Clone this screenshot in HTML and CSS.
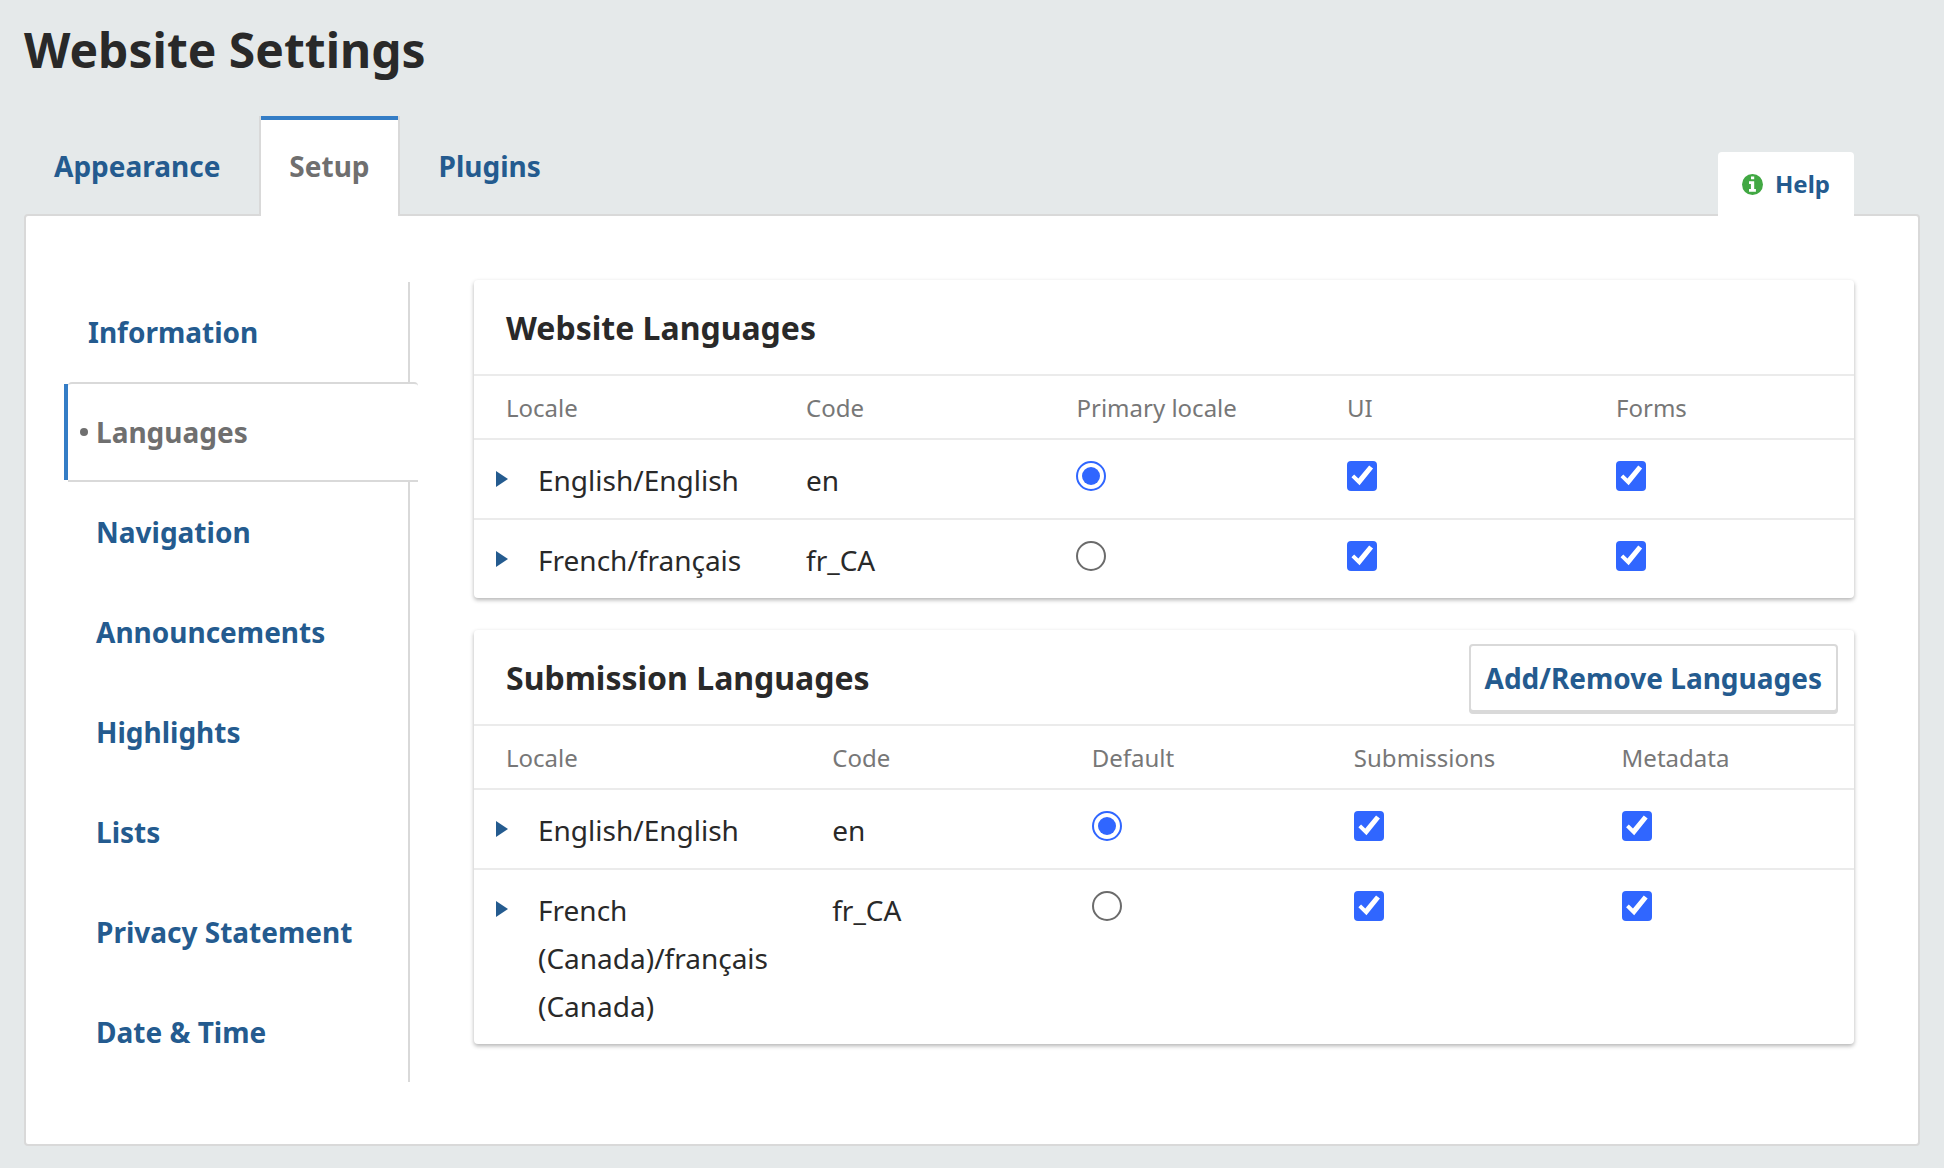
FILE: index.html
```html
<!DOCTYPE html>
<html lang="en">
<head>
<meta charset="utf-8">
<meta name="viewport" content="width=device-width, initial-scale=1">
<title>Website Settings</title>
<link rel="stylesheet" href="styles.css">
</head>
<body>
<main class="page">
  <h1 class="page-title">Website Settings</h1>

  <div class="tab-bar">
    <nav class="tabs" aria-label="Settings">
      <a class="tab" href="#appearance">Appearance</a>
      <a class="tab tab-current" href="#setup" aria-current="page">Setup</a>
      <a class="tab" href="#plugins">Plugins</a>
    </nav>
    <a class="help" href="#help">
      <svg class="help-icon" viewBox="0 0 21 21" aria-hidden="true">
        <circle cx="10.5" cy="10.5" r="10.5" fill="#41a843"/>
        <path fill="#fff" d="M9 2.4h3.2v2.8H9zM7 7.2h5.2v7.9h1.7v2.7H7v-2.7h1.9V9.9H7z"/>
      </svg>
      Help
    </a>
  </div>

  <div class="panel">
    <nav class="side-nav" aria-label="Setup">
      <a class="side-link side-link-first" href="#information">Information</a>
      <a class="side-link side-link-current" href="#languages" aria-current="page">Languages</a>
      <a class="side-link" href="#navigation">Navigation</a>
      <a class="side-link" href="#announcements">Announcements</a>
      <a class="side-link" href="#highlights">Highlights</a>
      <a class="side-link" href="#lists">Lists</a>
      <a class="side-link" href="#privacy">Privacy Statement</a>
      <a class="side-link" href="#datetime">Date &amp; Time</a>
    </nav>

    <div class="content">
      <section class="card" aria-labelledby="website-title">
        <div class="card-header">
          <h2 class="card-title" id="website-title">Website Languages</h2>
        </div>
        <table class="grid grid-website">
          <colgroup><col class="col-locale"><col class="col-code"><col class="col-radio"><col class="col-first-check"><col></colgroup>
          <thead>
            <tr><th scope="col">Locale</th><th scope="col">Code</th><th scope="col">Primary locale</th><th scope="col">UI</th><th scope="col">Forms</th></tr>
          </thead>
          <tbody>
            <tr>
              <td><div class="locale"><button class="expand" type="button" aria-label="Show settings for English"></button><span>English/English</span></div></td>
              <td>en</td>
              <td><input class="radio" type="radio" name="primary" aria-label="English as primary locale" checked></td>
              <td><input class="check" type="checkbox" aria-label="English in UI" checked></td>
              <td><input class="check" type="checkbox" aria-label="English in forms" checked></td>
            </tr>
            <tr>
              <td><div class="locale"><button class="expand" type="button" aria-label="Show settings for French"></button><span>French/français</span></div></td>
              <td>fr_CA</td>
              <td><input class="radio" type="radio" name="primary" aria-label="French as primary locale"></td>
              <td><input class="check" type="checkbox" aria-label="French in UI" checked></td>
              <td><input class="check" type="checkbox" aria-label="French in forms" checked></td>
            </tr>
          </tbody>
        </table>
      </section>

      <section class="card" aria-labelledby="submission-title">
        <div class="card-header">
          <h2 class="card-title" id="submission-title">Submission Languages</h2>
          <button class="button" type="button">Add/Remove Languages</button>
        </div>
        <table class="grid grid-submission">
          <colgroup><col class="col-locale"><col class="col-code"><col class="col-radio"><col class="col-first-check"><col></colgroup>
          <thead>
            <tr><th scope="col">Locale</th><th scope="col">Code</th><th scope="col">Default</th><th scope="col">Submissions</th><th scope="col">Metadata</th></tr>
          </thead>
          <tbody>
            <tr>
              <td><div class="locale"><button class="expand" type="button" aria-label="Show settings for English"></button><span>English/English</span></div></td>
              <td>en</td>
              <td><input class="radio" type="radio" name="default" aria-label="English as default" checked></td>
              <td><input class="check" type="checkbox" aria-label="English for submissions" checked></td>
              <td><input class="check" type="checkbox" aria-label="English for metadata" checked></td>
            </tr>
            <tr>
              <td><div class="locale"><button class="expand" type="button" aria-label="Show settings for French (Canada)"></button><span>French (Canada)/français (Canada)</span></div></td>
              <td>fr_CA</td>
              <td><input class="radio" type="radio" name="default" aria-label="French (Canada) as default"></td>
              <td><input class="check" type="checkbox" aria-label="French (Canada) for submissions" checked></td>
              <td><input class="check" type="checkbox" aria-label="French (Canada) for metadata" checked></td>
            </tr>
          </tbody>
        </table>
      </section>
    </div>
  </div>
</main>
</body>
</html>
```
FILE: styles.css
```css
:root {
  --text: #292929;
  --muted: #6f6f6f;
  --link: #245b8f;
  --accent: #347dc6;
  --control: #3066ff;
  --border: #d9d9d9;
  --rule: #ebebeb;
}

* {
  box-sizing: border-box;
}

body {
  margin: 0;
  background: #e5e9ea;
  color: var(--text);
  font-family: "Noto Sans", "Open Sans", sans-serif;
  font-size: 28px;
  line-height: 48px;
}

a {
  color: var(--link);
  font-weight: 700;
  text-decoration: none;
}

.page {
  padding: 18px 24px 22px;
}

.page-title {
  margin: 0 0 34px;
  font-size: 48px;
  line-height: 64px;
}

/* Tabs */
.tab-bar {
  display: flex;
  justify-content: space-between;
  align-items: flex-end;
  position: relative;
  margin-bottom: -2px;
  padding-right: 66px;
}

.tabs {
  display: flex;
  gap: 9px;
}

.tab {
  position: relative;
  padding: 26px 28px;
  border: solid transparent;
  border-width: 0 2px;
}

.tab-current {
  border-color: var(--border);
  background: #fff;
  color: var(--muted);
}

.tab-current::before {
  content: "";
  position: absolute;
  inset: 0 0 auto;
  height: 4px;
  background: var(--accent);
}

.help {
  display: flex;
  align-items: center;
  gap: 12px;
  height: 64px;
  padding: 0 24px;
  border-radius: 4px 4px 0 0;
  background: #fff;
  font-size: 24px;
}

.help-icon {
  width: 21px;
  height: 21px;
}

.panel {
  display: flex;
  align-items: flex-start;
  gap: 64px;
  padding: 64px 64px 62px 38px;
  border: 2px solid var(--border);
  border-radius: 4px;
  background: #fff;
}

/* Side navigation */
.side-nav {
  display: flex;
  flex: 0 0 346px;
  flex-direction: column;
  margin-top: 2px;
  border-right: 2px solid var(--border);
}

.side-link {
  padding: 26px 32px;
}

.side-link-first {
  padding-left: 24px;
}

.side-link-current {
  display: flex;
  align-items: center;
  gap: 8px;
  position: relative;
  margin: 0 -10px 0 4px;
  padding: 24px 12px;
  border: solid var(--border);
  border-width: 2px 0;
  border-radius: 4px 4px 0 0;
  background: #fff;
  color: var(--muted);
}

.side-link-current::before {
  content: "";
  width: 8px;
  height: 8px;
  border-radius: 50%;
  background: currentColor;
}

.side-link-current::after {
  content: "";
  position: absolute;
  inset: 0 auto 0 -4px;
  width: 4px;
  background: var(--accent);
}

/* Cards */
.content {
  display: flex;
  flex: 1;
  flex-direction: column;
  gap: 32px;
  min-width: 0;
}

.card {
  border-radius: 4px;
  background: #fff;
  box-shadow: 0 2px 4px rgba(0, 0, 0, 0.3);
}

.card-header {
  display: flex;
  align-items: center;
  justify-content: space-between;
  min-height: 96px;
  padding: 14px 16px 12px 32px;
  border-bottom: 2px solid var(--rule);
}

.card-title {
  margin: 0;
  font-size: 32px;
  line-height: 48px;
}

.button {
  padding: 8px 14px;
  border: 2px solid var(--border);
  border-radius: 4px;
  background: #fff;
  box-shadow: 0 2px 0 var(--border);
  color: var(--link);
  font: inherit;
  font-weight: 700;
}

/* Language tables */
.grid {
  width: 100%;
  border-spacing: 0;
  table-layout: fixed;
}

.grid-website .col-locale { width: 22.9%; }
.grid-website .col-code { width: 19.6%; }
.grid-website .col-radio { width: 19.6%; }
.grid-website .col-first-check { width: 19.5%; }

.grid-submission .col-locale { width: 24.8%; }
.grid-submission .col-code { width: 18.8%; }
.grid-submission .col-radio { width: 19%; }
.grid-submission .col-first-check { width: 19.4%; }

.grid th,
.grid td {
  padding: 16px 16px 14px;
  border-bottom: 2px solid var(--rule);
  text-align: left;
  vertical-align: top;
}

.grid th {
  color: #777;
  font-size: 24px;
  font-weight: 400;
  line-height: 32px;
}

.grid th:first-child {
  padding-left: 32px;
}

.grid tbody tr:last-child td {
  border-bottom: 0;
}

.locale {
  display: flex;
  align-items: flex-start;
  gap: 24px;
}

.expand {
  flex: none;
  width: 24px;
  height: 48px;
  padding: 0 6px 2px;
  border: 0;
  background: none;
}

.expand::before {
  content: "";
  display: block;
  width: 12px;
  height: 16px;
  background: var(--link);
  clip-path: polygon(0 0, 100% 50%, 0 100%);
}

.radio,
.check {
  display: block;
  width: 30px;
  height: 30px;
  margin: 5px 0 0;
  appearance: none;
  background: #fff;
}

.radio {
  padding: 4px;
  border: 2px solid #6b6b6b;
  border-radius: 50%;
}

.radio:checked {
  border-color: var(--control);
}

.radio:checked::before {
  content: "";
  display: block;
  width: 18px;
  height: 18px;
  border-radius: 50%;
  background: var(--control);
}

.check {
  border: 2px solid #6b6b6b;
  border-radius: 4px;
}

.check:checked {
  border: 0;
  background: var(--control);
}

.check:checked::before {
  content: "";
  display: block;
  height: 30px;
  background: #fff;
  clip-path: polygon(15% 54%, 24% 45%, 38% 58%, 74% 15%, 87% 25%, 42% 81%);
}
```
